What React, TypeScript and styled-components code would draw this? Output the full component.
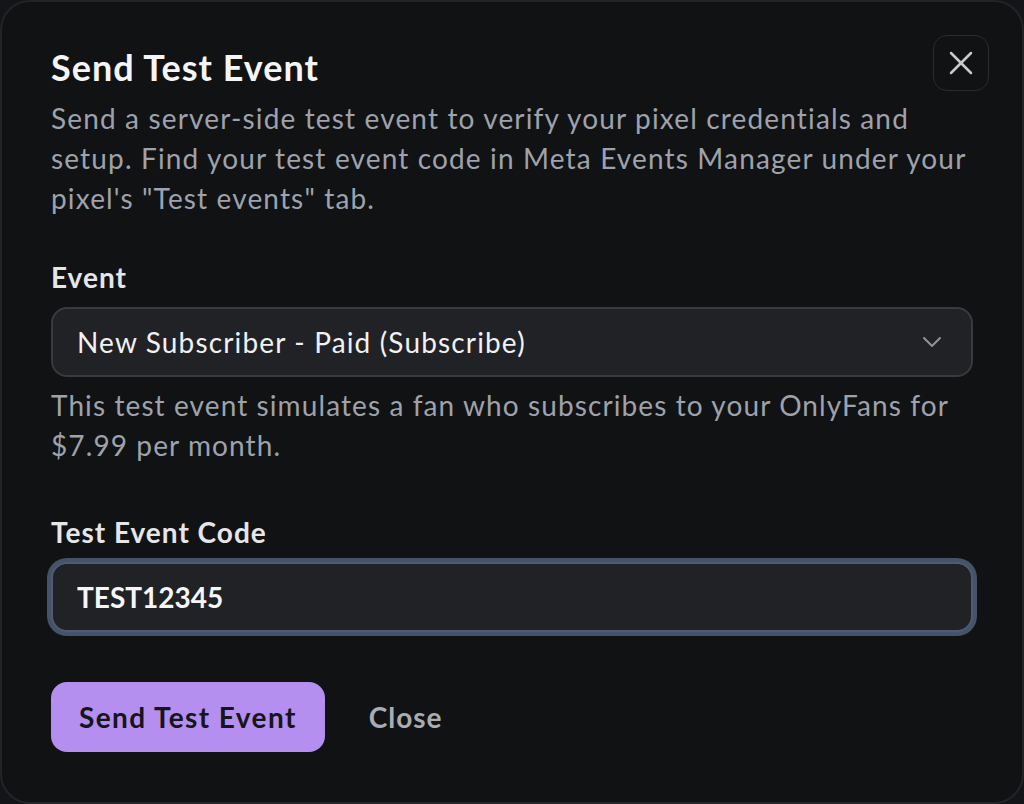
import React from "react";
import styled, { createGlobalStyle } from "styled-components";
import { ChevronDown, X } from "lucide-react";

const GlobalStyle = createGlobalStyle`
  html, body {
    margin: 0;
    padding: 0;
    background: #141518;
    font-family: "Lato", "Noto Sans", sans-serif;
  }
  * { box-sizing: border-box; }
`;

const Dialog = styled.div`
  position: relative;
  width: 1024px;
  height: 804px;
  background: #111214;
  border: 2px solid #232428;
  border-radius: 30px;
  padding: 37px 49px 48px 49px;
  display: flex;
  flex-direction: column;
`;

const CloseIcon = styled.button`
  position: absolute;
  top: 33px;
  right: 33px;
  width: 56px;
  height: 56px;
  border-radius: 14px;
  border: 1px solid #2b2c30;
  background: transparent;
  color: #c8cad0;
  display: flex;
  align-items: center;
  justify-content: center;
  padding: 0;
  cursor: pointer;
`;

const Title = styled.h2`
  margin: 0;
  font-size: 36px;
  line-height: 56px;
  font-weight: 700;
  color: #f5f5f7;
  letter-spacing: 1px;
`;

const Description = styled.p`
  margin: 3px 0 0;
  font-size: 28px;
  line-height: 40px;
  color: #9ea2ac;
  font-weight: 400;
  letter-spacing: 1.15px;
`;

const Field = styled.div<{ $top: number }>`
  margin-top: ${(p) => p.$top}px;
  display: flex;
  flex-direction: column;
`;

const Label = styled.label`
  font-size: 28px;
  line-height: 28px;
  font-weight: 700;
  color: #e6e6e9;
  margin-bottom: 16px;
  letter-spacing: 1px;
`;

const SelectBox = styled.div`
  height: 70px;
  border-radius: 16px;
  border: 2px solid #373a3f;
  background: #202226;
  display: flex;
  align-items: center;
  justify-content: space-between;
  padding: 0 23px 0 24px;
  color: #f1f1f3;
  font-size: 28px;
  letter-spacing: 1.15px;
`;

const Helper = styled.p`
  margin: 8px 0 0;
  font-size: 28px;
  line-height: 40px;
  color: #9ea2ac;
  letter-spacing: 1.1px;
`;

const Input = styled.input`
  height: 70px;
  border-radius: 16px;
  border: 2px solid #4d5b74;
  box-shadow: 0 0 0 4px #455369;
  background: #202226;
  padding: 0 24px;
  color: #f6f6f8;
  font-family: inherit;
  font-size: 28px;
  font-weight: 700;
  outline: none;
  letter-spacing: 0;
`;

const Actions = styled.div`
  margin-top: 50px;
  display: flex;
  align-items: center;
  gap: 16px;
`;

const PrimaryButton = styled.button`
  height: 70px;
  padding: 0 28px;
  border-radius: 16px;
  border: none;
  background: #b48fef;
  color: #15161a;
  font-family: inherit;
  font-size: 28px;
  font-weight: 700;
  letter-spacing: 1.4px;
  cursor: pointer;
`;

const GhostButton = styled.button`
  height: 70px;
  padding: 0 28px;
  border: none;
  background: transparent;
  color: #a9acb3;
  font-family: inherit;
  font-size: 28px;
  font-weight: 700;
  letter-spacing: 1px;
  cursor: pointer;
`;

export default function App() {
  return (
    <>
      <GlobalStyle />
      <Dialog>
        <CloseIcon aria-label="Close">
          <X size={40} strokeWidth={1.5} />
        </CloseIcon>
        <Title>Send Test Event</Title>
        <Description>
          Send a server-side test event to verify your pixel credentials and
          setup. Find your test event code in Meta Events Manager under your
          pixel's "Test events" tab.
        </Description>
        <Field $top={45}>
          <Label>Event</Label>
          <SelectBox>
            <span>New Subscriber - Paid (Subscribe)</span>
            <ChevronDown size={32} strokeWidth={1.5} color="#8f939a" />
          </SelectBox>
          <Helper>
            This test event simulates a fan who subscribes to your OnlyFans for
            $7.99 per month.
          </Helper>
        </Field>
        <Field $top={53}>
          <Label>Test Event Code</Label>
          <Input defaultValue="TEST12345" />
        </Field>
        <Actions>
          <PrimaryButton>Send Test Event</PrimaryButton>
          <GhostButton>Close</GhostButton>
        </Actions>
      </Dialog>
    </>
  );
}
